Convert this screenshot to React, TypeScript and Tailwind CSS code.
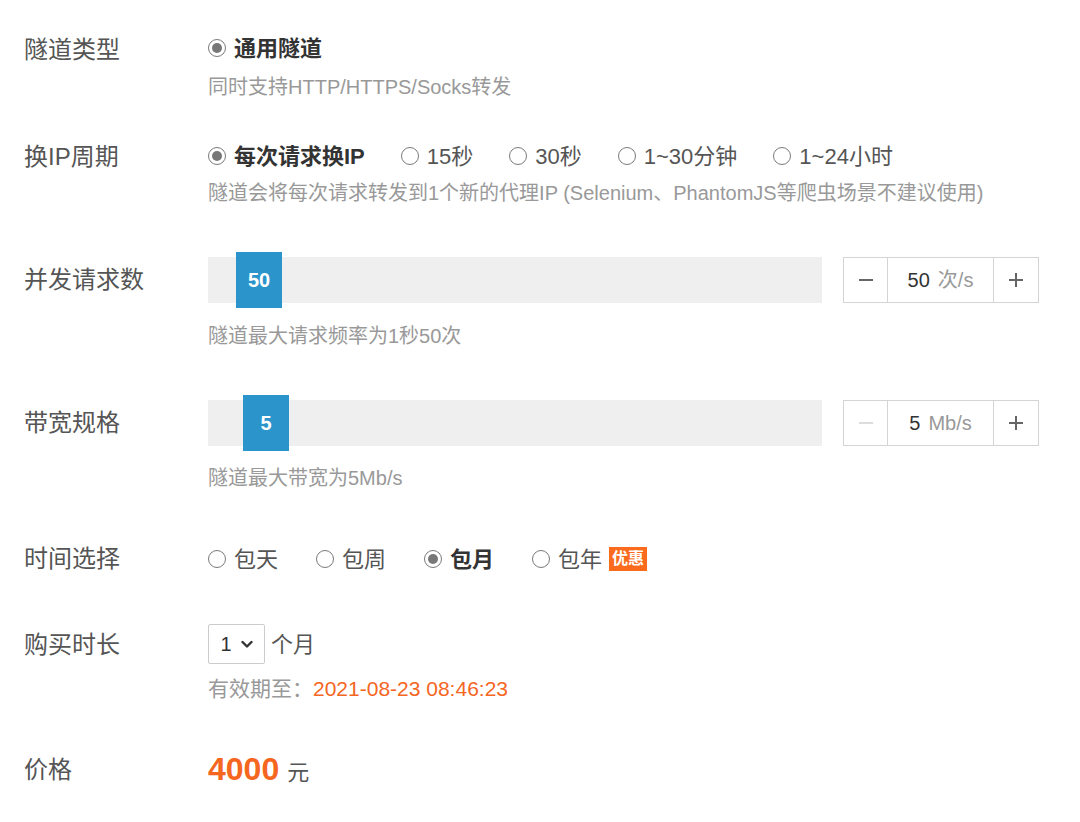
import React from 'react'

const font = { fontFamily: '"Liberation Sans", "Noto Sans CJK SC", sans-serif' }

function Radio({ checked }: { checked?: boolean }) {
  return (
    <span className="flex h-[18px] w-[18px] shrink-0 items-center justify-center rounded-full border-[1.5px] border-[#7a7a7a] bg-white">
      {checked && <span className="h-[10px] w-[10px] rounded-full bg-[#777]" />}
    </span>
  )
}

function Option({ label, checked, children }: { label: string; checked?: boolean; children?: React.ReactNode }) {
  return (
    <div className="flex items-center">
      <Radio checked={checked} />
      <span className={`ml-[8px] text-[22px] ${checked ? 'font-bold text-[#333]' : 'text-[#555]'}`}>{label}</span>
      {children}
    </div>
  )
}

function Label({ children, className = '' }: { children: React.ReactNode; className?: string }) {
  return <div className={`w-[184px] shrink-0 text-[24px] text-[#555] ${className}`}>{children}</div>
}

function Stepper({ value, unit, minusDisabled }: { value: string; unit: string; minusDisabled?: boolean }) {
  return (
    <div className="flex h-[46px] w-[196px] border border-[#d4d4d4] bg-white">
      <div className="flex w-[44px] items-center justify-center border-r border-[#d4d4d4]">
        <span className={`h-[2px] w-[14px] ${minusDisabled ? 'bg-[#ddd]' : 'bg-[#666]'}`} />
      </div>
      <div className="flex flex-1 items-center justify-center gap-[8px] text-[20px]">
        <span className="text-[#333]">{value}</span>
        <span className="text-[#999]">{unit}</span>
      </div>
      <div className="relative flex w-[45px] items-center justify-center border-l border-[#d4d4d4]">
        <span className="h-[2px] w-[14px] bg-[#666]" />
        <span className="absolute h-[14px] w-[2px] bg-[#666]" />
      </div>
    </div>
  )
}

function Slider({ value, offset }: { value: string; offset: number }) {
  return (
    <div className="relative flex h-[56px] w-[614px] items-center">
      <div className="h-[46px] w-full bg-[#efefef]" />
      <div
        className="absolute top-0 flex h-[56px] w-[46px] items-center justify-center bg-[#2b95cb] text-[20px] font-bold text-white"
        style={{ left: offset }}
      >
        {value}
      </div>
    </div>
  )
}

export default function App() {
  return (
    <div className="min-h-[822px] w-[1080px] bg-white px-6 pt-[32px]" style={font}>
      {/* 隧道类型 */}
      <div className="flex">
        <Label className="leading-[36px]">隧道类型</Label>
        <div>
          <div className="flex h-[32px] items-center">
            <Option label="通用隧道" checked />
          </div>
          <div className="mt-[9px] text-[20px] leading-[28px] text-[#999]">同时支持HTTP/HTTPS/Socks转发</div>
        </div>
      </div>

      {/* 换IP周期 */}
      <div className="mt-[39px] flex">
        <Label className="leading-[34px]">换IP周期</Label>
        <div>
          <div className="flex h-[32px] items-center gap-[36px]">
            <Option label="每次请求换IP" checked />
            <Option label="15秒" />
            <Option label="30秒" />
            <Option label="1~30分钟" />
            <Option label="1~24小时" />
          </div>
          <div className="mt-[7px] text-[20px] leading-[28px] text-[#999]">
            隧道会将每次请求转发到1个新的代理IP (Selenium、PhantomJS等爬虫场景不建议使用)
          </div>
        </div>
      </div>

      {/* 并发请求数 */}
      <div className="mt-[45px] flex">
        <Label className="leading-[56px]">并发请求数</Label>
        <div>
          <div className="flex items-center gap-[21px]">
            <Slider value="50" offset={28} />
            <Stepper value="50" unit="次/s" />
          </div>
          <div className="mt-[14px] text-[20px] leading-[28px] text-[#999]">隧道最大请求频率为1秒50次</div>
        </div>
      </div>

      {/* 带宽规格 */}
      <div className="mt-[45px] flex">
        <Label className="leading-[56px]">带宽规格</Label>
        <div>
          <div className="flex items-center gap-[21px]">
            <Slider value="5" offset={35} />
            <Stepper value="5" unit="Mb/s" minusDisabled />
          </div>
          <div className="mt-[13px] text-[20px] leading-[28px] text-[#999]">隧道最大带宽为5Mb/s</div>
        </div>
      </div>

      {/* 时间选择 */}
      <div className="mt-[51px] flex">
        <Label className="leading-[32px]">时间选择</Label>
        <div className="flex h-[32px] items-center gap-[38px]">
          <Option label="包天" />
          <Option label="包周" />
          <Option label="包月" checked />
          <Option label="包年">
            <span className="ml-[7px] flex h-[24px] items-center bg-[#fa6b1e] px-[3px] text-[16px] font-bold leading-none text-white">
              优惠
            </span>
          </Option>
        </div>
      </div>

      {/* 购买时长 */}
      <div className="mt-[49px] flex">
        <Label className="leading-[42px]">购买时长</Label>
        <div>
          <div className="flex items-center">
            <div className="flex h-[40px] w-[57px] items-center justify-center gap-[9px] rounded-[2px] border border-[#ccc] text-[20px] text-[#333]">
              <span>1</span>
              <svg width="12" height="9" viewBox="0 0 12 9" fill="none">
                <path d="M1.5 2 L6 6.5 L10.5 2" stroke="#333" strokeWidth="2.4" strokeLinecap="round" strokeLinejoin="round" />
              </svg>
            </div>
            <span className="ml-[6px] text-[22px] text-[#555]">个月</span>
          </div>
          <div className="mt-[11px] text-[21px] leading-[28px]">
            <span className="text-[#999]">有效期至：</span>
            <span className="text-[#f5661f]">2021-08-23 08:46:23</span>
          </div>
        </div>
      </div>

      {/* 价格 */}
      <div className="mt-[46px] flex">
        <Label className="leading-[42px]">价格</Label>
        <div className="flex h-[40px] items-baseline">
          <span className="text-[32px] font-bold leading-[40px] text-[#f5661f]">4000</span>
          <span className="ml-[8px] text-[22px] text-[#555]">元</span>
        </div>
      </div>
    </div>
  )
}
